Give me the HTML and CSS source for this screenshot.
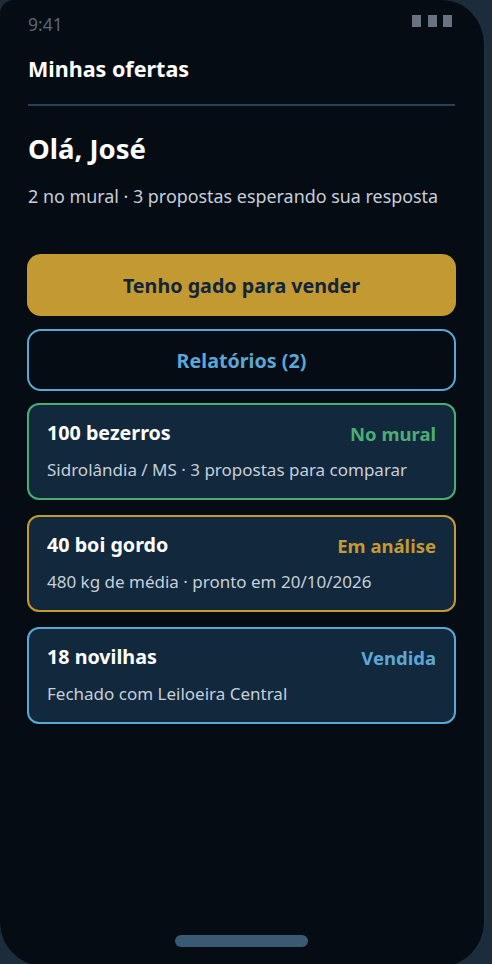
FILE: index.html
```html
<!DOCTYPE html>
<html lang="pt-BR">
<head>
  <meta charset="UTF-8">
  <meta name="viewport" content="width=device-width, initial-scale=1.0">
  <title>Minhas ofertas</title>
  <link rel="stylesheet" href="styles.css">
</head>
<body>

<div class="phone">
  <!-- Status bar -->
  <div class="status-bar">
    <span class="time">9:41</span>
    <div class="signal">
      <span></span><span></span><span></span>
    </div>
  </div>

  <!-- Header -->
  <header>
    <h1>Minhas ofertas</h1>
  </header>

  <main>
    <h2>Olá, José</h2>
    <p class="summary">2 no mural · 3 propostas esperando sua resposta</p>

    <div class="actions">
      <button class="btn-primary">Tenho gado para vender</button>
      <button class="btn-outline">Relatórios (2)</button>
    </div>

    <div class="offers">
      <div class="offer green">
        <div class="offer-top">
          <h3>100 bezerros</h3>
          <span class="tag">No mural</span>
        </div>
        <p>Sidrolândia / MS · 3 propostas para comparar</p>
      </div>

      <div class="offer gold">
        <div class="offer-top">
          <h3>40 boi gordo</h3>
          <span class="tag">Em análise</span>
        </div>
        <p>480 kg de média · pronto em 20/10/2026</p>
      </div>

      <div class="offer blue">
        <div class="offer-top">
          <h3>18 novilhas</h3>
          <span class="tag">Vendida</span>
        </div>
        <p>Fechado com Leiloeira Central</p>
      </div>
    </div>
  </main>

  <div class="home-bar"></div>
</div>

</body>
</html>
```

FILE: styles.css
```css
/* General Reset */
* {
  margin: 0;
  padding: 0;
  box-sizing: border-box;
  font-family: "Noto Sans", "Open Sans", sans-serif;
}

body {
  background-color: #1d2c3b;
  width: 492px;
  height: 964px;
  overflow: hidden;
}

/* Phone frame */
.phone {
  width: 486px;
  height: 966px;
  background-color: #050c14;
  border-right: 2px solid #1a3044;
  border-radius: 14px 44px 44px 44px;
  display: flex;
  flex-direction: column;
  padding: 0 28px 0 27px;
}

/* Status bar */
.status-bar {
  height: 44px;
  padding: 12px 4px 0 1px;
  display: flex;
  justify-content: space-between;
  align-items: flex-start;
}

.time {
  color: #5b6773;
  font-size: 17.5px;
  line-height: 24px;
}

.signal {
  display: flex;
  gap: 6.5px;
  margin-top: 3px;
}

.signal span {
  width: 9px;
  height: 12px;
  background: #677380;
}

/* Header */
header {
  margin: 0 1px;
  padding: 11px 0 21px;
  border-bottom: 2px solid #274058;
}

header h1 {
  color: #fff;
  font-size: 21.5px;
  font-weight: bold;
  line-height: 28px;
}

/* Main */
main {
  flex: 1;
  padding-top: 25px;
}

main h2 {
  color: #fff;
  font-size: 27.5px;
  font-weight: bold;
  line-height: 36px;
  padding-left: 1px;
}

.summary {
  color: #c6cfd9;
  font-size: 17.9px;
  line-height: 24px;
  margin-top: 17px;
  padding-left: 1px;
}

/* Buttons */
.actions {
  margin-top: 46px;
  display: flex;
  flex-direction: column;
  gap: 13px;
}

.actions button {
  width: 100%;
  height: 62px;
  border-radius: 14px;
  font-size: 19.7px;
  font-weight: bold;
  cursor: pointer;
}

.btn-primary {
  background-color: #c39a32;
  color: #14243a;
  border: none;
}

.btn-outline {
  background: transparent;
  color: #5ba7d6;
  border: 2px solid #5ba7d6;
}

/* Offer cards */
.offers {
  margin-top: 12px;
  display: flex;
  flex-direction: column;
  gap: 15px;
}

.offer {
  background: #12283d;
  border: 2px solid;
  border-radius: 12px;
  padding: 14px 18px 0;
  height: 97px;
}

.offer-top {
  display: flex;
  justify-content: space-between;
  align-items: center;
}

.offer h3 {
  color: #fff;
  font-size: 19.7px;
  font-weight: bold;
  line-height: 28px;
}

.tag {
  font-size: 18.5px;
  font-weight: bold;
}

.offer p {
  color: #c6cfd9;
  font-size: 17px;
  line-height: 22px;
  margin-top: 12px;
}

.offer.green { border-color: #4cad73; }
.offer.green .tag { color: #4cad73; }

.offer.gold { border-color: #c39a32; }
.offer.gold .tag { color: #c39a32; }

.offer.blue { border-color: #5ba7d6; }
.offer.blue .tag { color: #5ba7d6; }

/* Home indicator */
.home-bar {
  width: 133px;
  height: 12px;
  border-radius: 6px;
  background: #3a5a74;
  margin: 0 0 19px 148px;
}
```
